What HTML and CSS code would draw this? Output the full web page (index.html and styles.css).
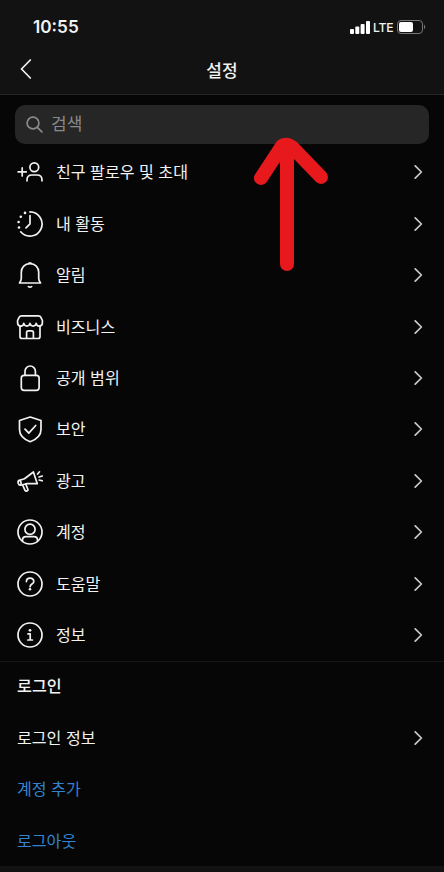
FILE: index.html
```html
<!doctype html>
<html lang="ko">
<head>
  <meta charset="UTF-8">
  <meta name="viewport" content="width=device-width, initial-scale=1">
  <title>설정</title>

  <link rel="stylesheet" href="styles.css">
</head>
<body>

<header class="top">
  <div class="status">
    <span class="time">10:55</span>
    <div class="signal">
      <svg class="bars" width="20" height="13" viewBox="0 0 20 13">
        <rect x="0" y="8" width="4" height="5" rx="1"/>
        <rect x="5.3" y="5.5" width="4" height="7.5" rx="1"/>
        <rect x="10.6" y="3" width="4" height="10" rx="1"/>
        <rect x="16" y="0" width="4" height="13" rx="1"/>
      </svg>
      <span class="lte">LTE</span>
      <svg class="battery" width="29" height="14" viewBox="0 0 29 14">
        <rect class="case" x=".5" y=".5" width="25" height="13" rx="3.5"/>
        <rect x="2" y="2" width="14" height="10" rx="2"/>
        <path class="tip" d="M27 4.8c1.6.6 1.6 3.8 0 4.4z"/>
      </svg>
    </div>
  </div>

  <nav class="nav">
    <svg class="back" width="12" height="20" viewBox="0 0 12 20"><path d="M10.3 1 1.5 10l8.8 9"/></svg>
    <h1>설정</h1>
  </nav>
</header>

<main>
  <div class="search">
    <svg width="17" height="17" viewBox="0 0 17 17"><circle cx="7" cy="7" r="5.9"/><path d="m11.3 11.3 4.6 4.6"/></svg>
    <span>검색</span>
  </div>

  <ul class="list menu">
    <li>
      <svg class="icon" viewBox="0 0 28 28"><circle cx="18.3" cy="9.3" r="4.4"/><path d="M11 22.8V22c0-3.2 2-5 5-5h5c3 0 5 1.8 5 5v.8M2.2 13.9h8M6.2 9.9v8"/></svg>
      <span>친구 팔로우 및 초대</span>
    </li>
    <li>
      <svg class="icon" viewBox="0 0 28 28"><path d="M14 1.9a12.1 12.1 0 1 1-9.3 19.9M14 5.5v8.3l-4 4"/><g class="dots"><circle cx="9" cy="2.9" r="1.3"/><circle cx="4.8" cy="6.7" r="1.3"/><circle cx="2.6" cy="12" r="1.3"/><circle cx="3" cy="17.5" r="1.3"/></g></svg>
      <span>내 활동</span>
    </li>
    <li>
      <svg class="icon" viewBox="0 0 28 28"><path d="M14 2.6c-5.2 0-8.7 3.8-8.7 8.7v6.2c0 1.5-.4 2.3-1.8 4.5h21c-1.4-2.2-1.8-3-1.8-4.5v-6.2c0-4.9-3.5-8.7-8.7-8.7z"/><path d="M13 2.2h2M12.4 25.6q1.6 1.1 3.2 0"/></svg>
      <span>알림</span>
    </li>
    <li>
      <svg class="icon" viewBox="0 0 28 28"><path d="M5.5 2.8h17c1.2 0 1.9.5 2.4 1.5l1.5 3.2v2.2c0 4.1-5.5 4.6-6.2.7-.7 3.5-5.5 3.5-6.2 0-.7 3.5-5.5 3.5-6.2 0-.7 3.9-6.2 3.4-6.2-.7V7.5l1.5-3.2c.5-1 1.2-1.5 2.4-1.5z"/><path d="M4 13v10.500c0 1.300.8 2 2 2h16c1.2 0 2-.7 2-2V13M10.6 25.5v-6c0-1 .7-1.7 1.7-1.7h3.4c1 0 1.7.7 1.7 1.7v6"/></svg>
      <span>비즈니스</span>
    </li>
    <li>
      <svg class="icon" viewBox="0 0 28 28"><rect x="5.3" y="11.3" width="17.8" height="15" rx="2.8"/><path d="M9 11.3V7.2a5.2 5.2 0 0 1 10.4 0v4.1"/></svg>
      <span>공개 범위</span>
    </li>
    <li>
      <svg class="icon" viewBox="0 0 28 28"><path d="M14.2 2 25 5.5v9c0 6-4 9.7-10.8 12.2C7.4 24.2 3.5 20.5 3.5 14.5v-9z"/><path d="m9 14.2 3.8 3.9 6.9-7.6"/></svg>
      <span>보안</span>
    </li>
    <li>
      <svg class="icon" viewBox="0 0 28 28"><path d="M17.4 5l3.9 11.7H10.5l-5.9 1.5c-2.2.5-3.6-3.9-1.4-4.8l5.3-1.6zM3.4 13.5c1.5.4 2.3 2.5 1.3 4.6M6.6 17.9 9 23.4c.5 1.2 3.4.4 2.9-.9l-2.2-5.6M21.6 7l1.9-2.2M23 10l3.3-1M23.2 13l3 .8"/></svg>
      <span>광고</span>
    </li>
    <li>
      <svg class="icon" viewBox="0 0 28 28"><circle cx="14" cy="14" r="12"/><circle cx="14" cy="11.2" r="5.1"/><path d="M6.5 23v-.8c0-2.4 1.5-3.5 3.5-3.5h8c2 0 3.5 1.1 3.5 3.5v.8"/></svg>
      <span>계정</span>
    </li>
    <li>
      <svg class="icon" viewBox="0 0 28 28"><circle cx="14" cy="14" r="12"/><path d="M10.4 11.6c0-4.6 7.4-4.5 7.4-.2 0 2.7-3.7 2.6-3.7 5.3"/><g class="dots"><circle cx="14" cy="19.3" r="1.3"/></g></svg>
      <span>도움말</span>
    </li>
    <li>
      <svg class="icon" viewBox="0 0 28 28"><circle cx="14" cy="14" r="12"/><path d="M12 12.9h2.2v6M11.8 19h4.6"/><g class="dots"><circle cx="14" cy="9.3" r="1.4"/></g></svg>
      <span>정보</span>
    </li>
  </ul>

  <section>
    <h2>로그인</h2>
    <ul class="list">
      <li><span>로그인 정보</span></li>
      <li class="link"><span>계정 추가</span></li>
      <li class="link"><span>로그아웃</span></li>
    </ul>
  </section>
</main>

<footer class="tabbar"></footer>

<svg class="arrow" width="76" height="136" viewBox="0 0 76 136">
  <path d="M35 127V10"/>
  <path d="M9 41 30 9q5-3 11 2l28 29"/>
</svg>

<script>
    // chevrons on every row that opens another page
    document.querySelectorAll('.list li:not(.link)').forEach(row => {
        row.insertAdjacentHTML('beforeend',
            '<svg class="chevron" width="9" height="14" viewBox="0 0 9 14"><path d="m1.2.8 6.2 6.2-6.2 6.2"/></svg>');
    });
</script>

</body>
</html>
```
FILE: styles.css
```css
* {
    margin: 0;
    padding: 0;
    box-sizing: border-box;
}

html, body {
    height: 100%;
    overflow: hidden;
}

body {
    display: flex;
    flex-direction: column;
    position: relative;
    background-color: #060606;
    color: #f2f2f2;
    font-family: "Noto Sans CJK KR", sans-serif;
    font-size: 16.1px;
}

svg {
    flex: none;
    fill: none;
    stroke: #f2f2f2;
    stroke-width: 1.7;
    stroke-linecap: round;
    stroke-linejoin: round;
}

.top {
    height: 95px;
    flex: none;
    background-color: #121212;
    border-bottom: 1px solid #262626;
}

.status {
    height: 46px;
    padding: 8px 18px 0 33px;
    display: flex;
    align-items: center;
    justify-content: space-between;
}

.time {
    padding-bottom: 1px;
    font-family: Inter, sans-serif;
    font-size: 17.2px;
    font-weight: 600;
}

.signal {
    display: flex;
    align-items: center;
    gap: 3px;
}

.bars, .battery {
    fill: #fff;
    stroke: none;
}

.lte {
    width: 21px;
    font-family: Inter, sans-serif;
    font-size: 12.2px;
    font-weight: 500;
    letter-spacing: -0.2px;
}

.battery .case {
    fill: none;
    stroke: #777;
    stroke-width: 1;
}

.battery .tip {
    fill: #777;
}

.nav {
    height: 48px;
    padding: 0 20px 2px;
    display: grid;
    grid-template-columns: 1fr auto 1fr;
    align-items: center;
}

.nav h1 {
    font-size: 17px;
    font-weight: 500;
}

.search {
    height: 38.5px;
    margin: 10px 15px 3.3px;
    padding: 0 11px;
    display: flex;
    align-items: center;
    gap: 8px;
    background-color: #262626;
    border-radius: 10px;
    color: #8a8a8a;
    font-size: 17px;
}

.search span {
    padding-bottom: 3px;
}

.search svg {
    stroke: #8a8a8a;
}

.list {
    list-style: none;
}

.list li, h2 {
    height: 51.4px;
    padding: 0 21px 0 17px;
    display: flex;
    align-items: center;
}

.list li span {
    padding-bottom: 2px;
}

.menu {
    border-bottom: 1px solid #161616;
}

.menu li {
    padding-left: 16px;
    gap: 12px;
}

h2 {
    padding-bottom: 2px;
    font-size: 16.2px;
    font-weight: 500;
}

section {
    margin-top: -1px;
}

.list .link {
    color: #3284d0;
}

.icon {
    width: 28px;
    height: 28px;
}

.icon .dots {
    fill: #f2f2f2;
    stroke: none;
}

.chevron {
    margin-left: auto;
    stroke: #c8c8c8;
}

.tabbar {
    flex: 1;
    background-color: #121212;
}

.arrow {
    position: absolute;
    left: 252px;
    top: 137px;
    stroke: #e8191c;
    stroke-width: 14;
    overflow: visible;
}
```
